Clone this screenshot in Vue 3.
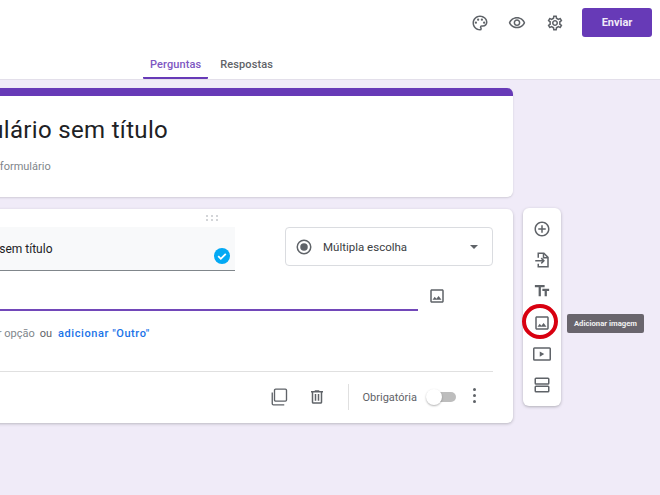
<script setup>
const toolIcons = [
  { name: 'add', active: false },
  { name: 'import', active: false },
  { name: 'title', active: false },
  { name: 'image', active: true },
  { name: 'video', active: false },
  { name: 'section', active: false },
];
</script>

<template>
  <div class="page">
    <header class="topbar">
      <div class="actions">
        <svg class="icon" viewBox="0 0 24 24">
          <path d="M12 22C6.49 22 2 17.51 2 12S6.49 2 12 2s10 4.04 10 9c0 3.31-2.69 6-6 6h-1.77c-.28 0-.5.22-.5.5 0 .12.05.23.13.33.41.47.64 1.06.64 1.67A2.5 2.5 0 0 1 12 22zm0-18c-4.41 0-8 3.59-8 8s3.59 8 8 8c.28 0 .5-.22.5-.5a.54.54 0 0 0-.14-.35c-.41-.46-.63-1.05-.63-1.65a2.5 2.5 0 0 1 2.5-2.5H16c2.21 0 4-1.79 4-4 0-3.86-3.59-7-8-7z" />
          <circle cx="6.5" cy="11.5" r="1.5" />
          <circle cx="9.5" cy="7.5" r="1.5" />
          <circle cx="14.5" cy="7.5" r="1.5" />
          <circle cx="17.5" cy="11.5" r="1.5" />
        </svg>
        <svg class="icon" viewBox="0 0 24 24">
          <path d="M12 6c3.79 0 7.17 2.13 8.82 5.5C19.17 14.87 15.79 17 12 17s-7.17-2.13-8.82-5.5C4.83 8.13 8.21 6 12 6m0-2C7 4 2.73 7.11 1 11.5 2.73 15.89 7 19 12 19s9.27-3.11 11-7.5C21.27 7.11 17 4 12 4zm0 5c1.38 0 2.5 1.12 2.5 2.5S13.38 14 12 14s-2.5-1.12-2.5-2.5S10.62 9 12 9m0-2c-2.48 0-4.5 2.02-4.5 4.5S9.52 16 12 16s4.5-2.02 4.5-4.5S14.48 7 12 7z" />
        </svg>
        <svg class="icon" viewBox="0 0 24 24">
          <path d="M19.43 12.98c.04-.32.07-.64.07-.98 0-.34-.03-.66-.07-.98l2.11-1.65c.19-.15.24-.42.12-.64l-2-3.46c-.09-.16-.26-.25-.44-.25-.06 0-.12.01-.17.03l-2.49 1c-.52-.4-1.08-.73-1.69-.98l-.38-2.65C14.46 2.18 14.25 2 14 2h-4c-.25 0-.46.18-.49.42l-.38 2.65c-.61.25-1.17.59-1.69.98l-2.49-1c-.06-.02-.12-.03-.18-.03-.17 0-.34.09-.43.25l-2 3.46c-.13.22-.07.49.12.64l2.11 1.65c-.04.32-.07.65-.07.98 0 .33.03.66.07.98l-2.11 1.65c-.19.15-.24.42-.12.64l2 3.46c.09.16.26.25.44.25.06 0 .12-.01.17-.03l2.49-1c.52.4 1.08.73 1.69.98l.38 2.65c.03.24.24.42.49.42h4c.25 0 .46-.18.49-.42l.38-2.65c.61-.25 1.17-.59 1.69-.98l2.49 1c.06.02.12.03.18.03.17 0 .34-.09.43-.25l2-3.46c.12-.22.07-.49-.12-.64l-2.11-1.65zm-1.98-1.71c.04.31.05.52.05.73 0 .21-.02.43-.05.73l-.14 1.13.89.7 1.08.84-.7 1.21-1.27-.51-1.04-.42-.9.68c-.43.32-.84.56-1.25.73l-1.06.43-.16 1.13-.2 1.35h-1.4l-.19-1.35-.16-1.13-1.06-.43c-.43-.18-.83-.41-1.23-.71l-.91-.7-1.06.43-1.27.51-.7-1.21 1.08-.84.89-.7-.14-1.13c-.03-.31-.05-.54-.05-.74s.02-.43.05-.73l.14-1.13-.89-.7-1.08-.84.7-1.21 1.27.51 1.04.42.9-.68c.43-.32.84-.56 1.25-.73l1.06-.43.16-1.13.2-1.35h1.39l.19 1.35.16 1.13 1.06.43c.43.18.83.41 1.23.71l.91.7 1.06-.43 1.27-.51.7 1.21-1.07.85-.89.7.14 1.13zM12 8c-2.21 0-4 1.79-4 4s1.79 4 4 4 4-1.79 4-4-1.79-4-4-4zm0 6c-1.1 0-2-.9-2-2s.9-2 2-2 2 .9 2 2-.9 2-2 2z" />
        </svg>
        <button class="send">Enviar</button>
      </div>
      <nav class="tabs">
        <span class="tab selected">Perguntas</span>
        <span class="tab">Respostas</span>
      </nav>
    </header>

    <main class="content">
      <div class="cards">
        <section class="card title-card">
          <h1>Formulário sem título</h1>
          <p>Descrição do formulário</p>
        </section>

        <section class="card question-card">
          <div class="drag"><i v-for="n in 6" :key="n"></i></div>
          <div class="question-top">
            <div class="question-input">
              <span>Pergunta sem título</span>
              <span class="check">
                <svg viewBox="0 0 16 16"><path d="M4.2 8.2l2.6 2.6 5-5" /></svg>
              </span>
            </div>
            <div class="type-select">
              <svg class="radio" viewBox="0 0 24 24">
                <circle cx="12" cy="12" r="9" class="ring" />
                <circle cx="12" cy="12" r="5" />
              </svg>
              <span class="type-label">Múltipla escolha</span>
              <span class="caret"></span>
            </div>
          </div>
          <div class="option-row">
            <div class="option-input"></div>
            <svg class="icon-sm" viewBox="0 0 24 24">
              <path d="M19 5v14H5V5h14m0-2H5c-1.1 0-2 .9-2 2v14c0 1.1.9 2 2 2h14c1.1 0 2-.9 2-2V5c0-1.1-.9-2-2-2zm-4.86 8.86l-3 3.87L9 13.14 6 17h12l-3.86-5.14z" />
            </svg>
          </div>
          <div class="add-option">
            <span class="muted">Adicionar opção</span>
            <span class="or">ou</span>
            <span class="other">adicionar "Outro"</span>
          </div>
          <div class="card-footer">
            <svg class="icon copy" viewBox="0 0 24 24">
              <rect x="6" y="1.5" width="16" height="16" rx="1.5" />
              <path d="M3 6v15a1.5 1.5 0 0 0 1.5 1.5H19" />
            </svg>
            <svg class="icon trash" viewBox="0 0 24 24">
              <path d="M15 4V3H9v1H4v2h1v13c0 1.1.9 2 2 2h10c1.1 0 2-.9 2-2V6h1V4h-5zm2 15H7V6h10v13zM9 8h2v9H9zm4 0h2v9h-2z" />
            </svg>
            <span class="divider"></span>
            <span class="required">Obrigatória</span>
            <span class="toggle"><span class="knob"></span></span>
            <span class="more"><i></i><i></i><i></i></span>
          </div>
        </section>
      </div>

      <aside class="toolbar">
        <div v-for="tool in toolIcons" :key="tool.name" class="tool">
          <svg v-if="tool.name === 'add'" viewBox="0 0 24 24">
            <path d="M13 7h-2v4H7v2h4v4h2v-4h4v-2h-4V7zm-1-5C6.48 2 2 6.48 2 12s4.48 10 10 10 10-4.48 10-10S17.52 2 12 2zm0 18c-4.41 0-8-3.59-8-8s3.59-8 8-8 8 3.59 8 8-3.59 8-8 8z" />
          </svg>
          <svg v-else-if="tool.name === 'import'" class="line" viewBox="0 0 24 24">
            <path d="M7 9V3h7.5L20 8.5V21H7v-4" />
            <path d="M14 3v6h6" />
            <path d="M3 13h11M11 9.5l3.5 3.5-3.5 3.5" />
          </svg>
          <svg v-else-if="tool.name === 'title'" viewBox="0 0 24 24">
            <path d="M2.5 4v3h5v12h3V7h5V4h-13zm19 5h-9v3h3v7h3v-7h3V9z" />
          </svg>
          <svg v-else-if="tool.name === 'image'" viewBox="0 0 24 24">
            <path d="M19 5v14H5V5h14m0-2H5c-1.1 0-2 .9-2 2v14c0 1.1.9 2 2 2h14c1.1 0 2-.9 2-2V5c0-1.1-.9-2-2-2zm-4.86 8.86l-3 3.87L9 13.14 6 17h12l-3.86-5.14z" />
          </svg>
          <svg v-else-if="tool.name === 'video'" class="line" viewBox="0 0 24 24">
            <rect x="1" y="4" width="22" height="16" rx="1" />
            <path class="solid" d="M9 8.5v7l6-3.5z" />
          </svg>
          <svg v-else class="line" viewBox="0 0 24 24">
            <rect x="3" y="3" width="18" height="7.5" rx="1" />
            <rect x="3" y="13.5" width="18" height="7.5" rx="1" />
          </svg>
          <span v-if="tool.active" class="highlight"></span>
          <span v-if="tool.active" class="tooltip">Adicionar imagem</span>
        </div>
      </aside>
    </main>
  </div>
</template>

<style>
html,
body {
  margin: 0;
  overflow: hidden;
}
</style>

<style scoped>
.page {
  width: 660px;
  height: 495px;
  overflow: hidden;
  display: flex;
  flex-direction: column;
  background: #f0ebf8;
  font-family: Roboto, "Liberation Sans", sans-serif;
  color: #3c4043;
}

.topbar {
  height: 80px;
  box-sizing: border-box;
  flex-shrink: 0;
  background: #fff;
  border-bottom: 1px solid #e3dfea;
  position: relative;
}

.actions {
  display: flex;
  justify-content: flex-end;
  align-items: center;
  height: 29px;
  padding: 8px 8px 0 0;
}

.icon {
  width: 18px;
  height: 18px;
  fill: #5f6368;
  flex-shrink: 0;
}

.actions .icon {
  margin-right: 20px;
}

.actions .icon:first-child {
  margin-right: 19px;
}

.actions .icon:nth-child(3) {
  margin-right: 18px;
}

.send {
  width: 70px;
  height: 29px;
  border: 0;
  border-radius: 3px;
  background: #673ab7;
  color: #f0ebf8;
  font: 700 11px Roboto, sans-serif;
}

.tabs {
  display: flex;
  margin-top: 13px;
  padding-left: 143px;
}

.tab {
  height: 29px;
  box-sizing: border-box;
  padding: 8px 7px 0;
  font-size: 11px;
  font-weight: 500;
  color: #5f6368;
  margin-right: 5px;
  letter-spacing: 0.1px;
}

.tab.selected {
  color: #7e57c2;
  border-bottom: 2px solid #673ab7;
  border-radius: 0 0 1px 1px;
  margin-right: 4px;
}

.tab + .tab {
  margin-left: 1px;
}

.content {
  display: flex;
  align-items: flex-start;
  gap: 10px;
  padding-top: 8px;
}

.cards {
  width: 604px;
  margin-left: -91px;
  flex-shrink: 0;
  display: flex;
  flex-direction: column;
  gap: 12px;
}

.card {
  background: #fff;
  border-radius: 6px;
  box-shadow: 0 1px 2px rgba(60, 64, 67, 0.18);
}

.title-card {
  height: 109px;
  box-sizing: border-box;
  border-top: 8px solid #673ab7;
  padding: 18px 24px 0;
}

.title-card h1 {
  margin: 0;
  font-size: 24px;
  font-weight: 400;
  line-height: 32px;
  letter-spacing: 0.33px;
  color: #202124;
}

.title-card p {
  margin: 13px 0 0;
  font-size: 11px;
  line-height: 16px;
  color: #80868b;
}

.question-card {
  height: 214px;
  padding: 0 20px 0 24px;
  box-sizing: border-box;
  box-shadow: 0 1px 3px rgba(60, 64, 67, 0.3);
}

.drag {
  height: 18px;
  width: 13px;
  margin: 0 auto;
  padding-top: 6px;
  box-sizing: border-box;
  display: grid;
  grid-template-columns: repeat(3, 2px);
  grid-auto-rows: 2px;
  column-gap: 3px;
  row-gap: 2px;
  transform: translateX(-1px);
}

.drag i {
  background: #c4c7cb;
  border-radius: 50%;
}

.question-top {
  display: flex;
  align-items: flex-start;
  gap: 50px;
}

.question-input {
  width: 302px;
  height: 44px;
  box-sizing: border-box;
  padding: 14px 0 0 15px;
  background: #f8f9fa;
  border-bottom: 1px solid #80868b;
  font-size: 12px;
  line-height: 16px;
  color: #202124;
  position: relative;
}

.check {
  position: absolute;
  right: 5px;
  bottom: 6px;
  width: 16px;
  height: 16px;
  border-radius: 50%;
  background: #03a9f4;
  display: flex;
}

.check svg {
  fill: none;
  stroke: #fff;
  stroke-width: 1.8;
}

.type-select {
  width: 208px;
  height: 39px;
  box-sizing: border-box;
  display: flex;
  align-items: center;
  padding: 0 14px 0 9px;
  border: 1px solid #dadce0;
  border-radius: 4px;
  font-size: 11.5px;
}

.radio {
  width: 18px;
  height: 18px;
  fill: #5f6368;
}

.radio .ring {
  fill: none;
  stroke: #5f6368;
  stroke-width: 2;
}

.type-label {
  margin-left: 10px;
  flex: 1;
}

.caret {
  border: 4px solid transparent;
  border-top-color: #5f6368;
  margin-top: 4px;
}

.option-row {
  display: flex;
  align-items: flex-start;
  margin-top: 16px;
}

.option-input {
  width: 485px;
  height: 22px;
  border-bottom: 2px solid #7248b9;
}

.icon-sm {
  width: 18px;
  height: 18px;
  fill: #5f6368;
  margin-left: 10px;
}

.add-option {
  display: flex;
  gap: 5px;
  padding-left: 22px;
  margin-top: 15px;
  font-size: 11px;
  line-height: 16px;
}

.muted {
  color: #80868b;
}

.or {
  color: #5f6368;
}

.other {
  color: #1a73e8;
  font-weight: 500;
  margin-left: 1px;
  letter-spacing: 0.57px;
}

.card-footer {
  display: flex;
  align-items: center;
  justify-content: flex-end;
  height: 51px;
  margin-top: 29px;
  border-top: 1px solid #e0e0e0;
  box-sizing: border-box;
  font-size: 11px;
}

.copy {
  fill: none;
  stroke: #5f6368;
  stroke-width: 1.8;
}

.trash {
  margin-left: 20px;
}

.divider {
  width: 1px;
  height: 26px;
  background: #e0e0e0;
  margin: 0 14px 0 22px;
}

.required {
  color: #5f6368;
}

.toggle {
  position: relative;
  width: 28px;
  height: 10px;
  margin-left: 11px;
  border-radius: 5px;
  background: #bdbdbd;
}

.knob {
  position: absolute;
  left: -2px;
  top: -3px;
  width: 16px;
  height: 16px;
  border-radius: 50%;
  background: #fff;
  box-shadow: 0 1px 2px rgba(0, 0, 0, 0.3);
}

.more {
  display: flex;
  flex-direction: column;
  gap: 3px;
  margin: -3px 17.5px 0 16.5px;
}

.more i {
  width: 3px;
  height: 3px;
  border-radius: 50%;
  background: #5f6368;
}

.toolbar {
  width: 38px;
  margin-top: 120px;
  padding: 5px 0 5px;
  background: #fff;
  border-radius: 6px;
  box-shadow: 0 1px 3px rgba(60, 64, 67, 0.35);
  flex-shrink: 0;
}

.tool {
  position: relative;
  height: 31.3px;
  display: flex;
  align-items: center;
  justify-content: center;
}

.tool svg {
  width: 18px;
  height: 18px;
  fill: #5f6368;
}

.tool svg.line {
  fill: none;
  stroke: #5f6368;
  stroke-width: 2;
}

.tool svg .solid {
  fill: #5f6368;
  stroke: none;
}

.highlight {
  position: absolute;
  left: -1px;
  top: -3px;
  width: 36px;
  height: 35px;
  box-sizing: border-box;
  border: 4px solid #d80010;
  border-radius: 50%;
}

.tooltip {
  position: absolute;
  left: 44px;
  top: 7px;
  width: 77px;
  height: 19px;
  border-radius: 2px;
  background: #69656d;
  color: #f1f1f1;
  font-size: 7.7px;
  font-weight: 700;
  line-height: 19px;
  text-align: center;
  white-space: nowrap;
}
</style>
